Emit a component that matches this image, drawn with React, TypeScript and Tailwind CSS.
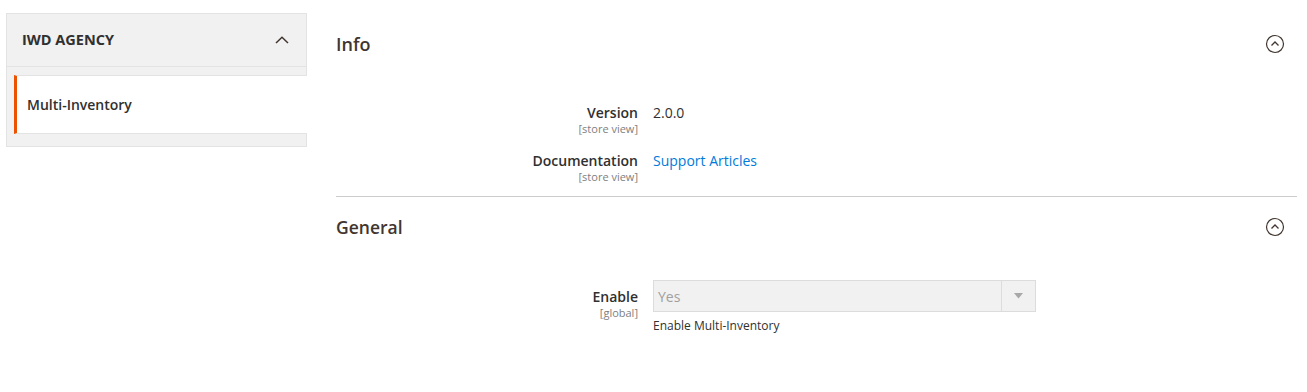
import React from "react";

const CircleUp = () => (
  <svg width="20" height="20" viewBox="0 0 20 20" fill="none">
    <circle cx="10" cy="10" r="8.5" stroke="#41362f" strokeWidth="1.2" />
    <path d="M6.5 11.5 L10 8 L13.5 11.5" stroke="#41362f" strokeWidth="1.3" />
  </svg>
);

function Label({ title, scope }: { title: string; scope: string }) {
  return (
    <div className="w-[302px] shrink-0 text-right">
      <div className="text-[14px] leading-[19px] font-semibold text-[#303030]">{title}</div>
      <div className="text-[11px] leading-[14px] text-[#808080]">{scope}</div>
    </div>
  );
}

export default function App() {
  return (
    <div
      className="w-[1307px] h-[392px] bg-white flex text-[#303030]"
      style={{ fontFamily: '"Open Sans", "Liberation Sans", sans-serif' }}
    >
      <div className="pl-[6px] pt-[13px] w-[307px] shrink-0">
        <div className="border border-[#e3e3e3] bg-[#f1f1f1] pb-[12px]">
          <div className="h-[53px] flex items-center justify-between pl-[15px] pr-[17px] border-b border-[#e3e3e3]">
            <span className="text-[14.5px] font-bold text-[#303030] tracking-[0px]">IWD AGENCY</span>
            <svg width="14" height="8" viewBox="0 0 14 8" fill="none">
              <path d="M1 7 L7 1.2 L13 7" stroke="#41362f" strokeWidth="1.5" />
            </svg>
          </div>
          <div className="mt-[8px] ml-[7px] -mr-px bg-white border-y border-[#e3e3e3] border-l-[3px] border-l-[#eb5202] h-[59px] flex items-center pl-[10px]">
            <span className="text-[14px] font-semibold text-[#303030]">Multi-Inventory</span>
          </div>
        </div>
      </div>
      <div className="ml-[29px] w-[961px] pt-[32px]">
        <div className="flex items-center justify-between h-[24px] pr-[12px]">
          <span className="text-[18px] font-semibold text-[#41362f]">Info</span>
          <CircleUp />
        </div>
        <div className="mt-[47px] flex">
          <Label title="Version" scope="[store view]" />
          <div className="ml-[15px] text-[14px] leading-[19px]">2.0.0</div>
        </div>
        <div className="mt-[15px] flex">
          <Label title="Documentation" scope="[store view]" />
          <div className="ml-[15px] text-[14px] leading-[19px] text-[#007bdb]">Support Articles</div>
        </div>
        <div className="mt-[12px] border-t border-[#cccccc]" />
        <div className="mt-[18px] flex items-center justify-between h-[24px] pr-[12px]">
          <span className="text-[17.5px] font-semibold text-[#41362f]">General</span>
          <CircleUp />
        </div>
        <div className="mt-[41px] flex">
          <div className="pt-[7px]">
            <Label title="Enable" scope="[global]" />
          </div>
          <div className="ml-[15px]">
            <div className="w-[383px] h-[32px] border border-[#dcdcdc] bg-[#f1f1f1] flex">
              <div className="flex-1 flex items-center pl-[4px] text-[14px] text-[#a0a0a0]">Yes</div>
              <div className="w-[34px] border-l border-[#dcdcdc] flex items-center justify-center">
                <svg width="9" height="6" viewBox="0 0 9 6">
                  <path d="M0 0 H9 L4.5 5.5 Z" fill="#a8a8a8" />
                </svg>
              </div>
            </div>
            <div className="mt-[6px] text-[12px] leading-[16px] text-[#303030]">Enable Multi-Inventory</div>
          </div>
        </div>
      </div>
    </div>
  );
}
